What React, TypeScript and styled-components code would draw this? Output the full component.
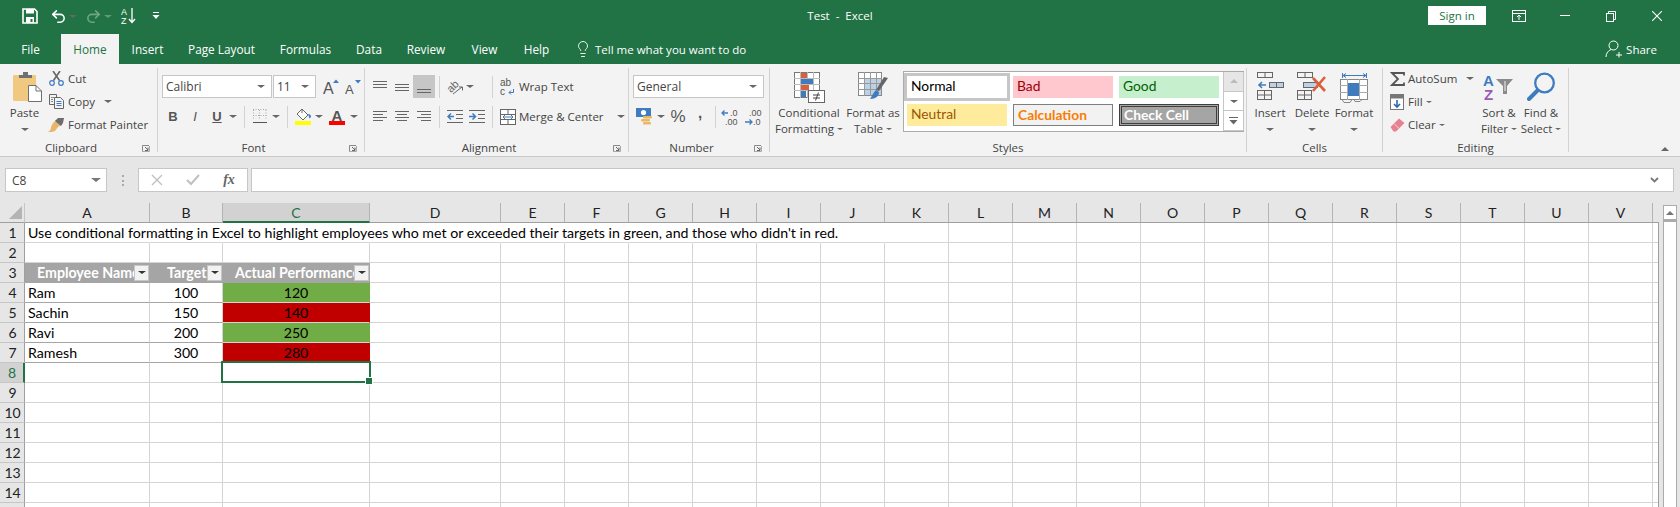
import React from "react";
import styled, { createGlobalStyle } from "styled-components";
import { Lightbulb, Redo2, Undo2 } from "lucide-react";

const GREEN = "#217346";
const UI_FONT = `"Open Sans", "Noto Sans", sans-serif`;
const SHEET_FONT = `Lato, "Liberation Sans", sans-serif`;

const GlobalStyle = createGlobalStyle`
  html, body { margin: 0; padding: 0; background: #fff; overflow: hidden; }
  * { box-sizing: border-box; }
`;

const Page = styled.div`
  width: 1680px;
  height: 507px;
  overflow: hidden;
  font-family: ${UI_FONT};
  font-size: 11.5px;
  color: #444;
`;

/* title bar */
const TitleBar = styled.div`
  height: 34px;
  background: ${GREEN};
  color: #fff;
  display: grid;
  grid-template-columns: 1fr auto 1fr;
  align-items: start;
`;
const QuickAccess = styled.div`
  display: flex;
  align-items: center;
  height: 32px;
  padding-left: 20px;
`;
const Btn = styled.div<{ $w: number; $l?: number }>`
  width: ${(p) => p.$w}px;
  margin-left: ${(p) => p.$l ?? 0}px;
  flex: none;
  height: 100%;
  display: flex;
  align-items: center;
  justify-content: center;
`;
const DocTitle = styled.div`
  font-size: 11.5px;
  line-height: 32px;
  color: #fff;
  white-space: pre;
`;
const WindowArea = styled.div`
  display: flex;
  justify-content: flex-end;
  height: 32px;
`;
const SignIn = styled.div`
  width: 58px;
  height: 19px;
  margin: 6px 10px 0 0;
  background: #fff;
  color: ${GREEN};
  font-size: 11.5px;
  line-height: 19px;
  text-align: center;
`;
const WinBtn = styled.div`
  width: 46px;
  display: flex;
  align-items: center;
  justify-content: center;
`;

/* tabs */
const TabRow = styled.div`
  height: 30px;
  background: ${GREEN};
  display: flex;
  align-items: stretch;
  color: #fff;
`;
const Tab = styled.div<{ $w: number; $active?: boolean }>`
  width: ${(p) => p.$w}px;
  text-align: center;
  font-size: 11.8px;
  line-height: 30px;
  background: ${(p) => (p.$active ? "#f3f3f3" : "transparent")};
  color: ${(p) => (p.$active ? GREEN : "#fff")};
`;
const TellMe = styled.div`
  display: flex;
  align-items: center;
  gap: 3px;
  margin-left: 12px;
  font-size: 11.5px;
`;
const Share = styled.div`
  margin-left: auto;
  padding-right: 23px;
  display: flex;
  align-items: center;
  gap: 2px;
  font-size: 11.5px;
`;

/* ribbon */
const Ribbon = styled.div`
  height: 93px;
  background: #f3f3f3;
  border-bottom: 1px solid #c9c9c9;
  padding-top: 4px;
  display: flex;
  align-items: flex-start;
  position: relative;
`;
const Group = styled.div<{ $w: number }>`
  width: ${(p) => p.$w}px;
  height: 84px;
  flex: none;
  border-right: 1px solid #d2d2d2;
  display: flex;
  flex-direction: column;
`;
const GroupBody = styled.div<{ $pad?: number }>`
  height: 72px;
  flex: none;
  padding-left: ${(p) => p.$pad ?? 0}px;
  display: flex;
  align-items: flex-start;
`;
const GroupFoot = styled.div`
  height: 16px;
  flex: none;
  display: flex;
  align-items: center;
`;
const GroupLabel = styled.div`
  flex: 1;
  text-align: center;
  font-size: 11.5px;
  line-height: 16px;
  color: #444;
`;
const Launcher = styled.div`
  width: 15px;
  display: flex;
  align-items: center;
`;
const Collapse = styled.div`
  position: absolute;
  right: 8px;
  bottom: 5px;
  width: 14px;
  display: flex;
  justify-content: center;
`;
const Caret = styled.span<{ $c?: string; $s?: number }>`
  display: inline-block;
  flex: none;
  width: 0;
  height: 0;
  border-left: ${(p) => p.$s ?? 4}px solid transparent;
  border-right: ${(p) => p.$s ?? 4}px solid transparent;
  border-top: ${(p) => (p.$s ?? 4) - 1}px solid ${(p) => p.$c ?? "#666"};
`;
const ThreeRows = styled.div<{ $w?: number; $l?: number }>`
  width: ${(p) => (p.$w ? `${p.$w}px` : "auto")};
  margin: -1px 0 0 ${(p) => p.$l ?? 0}px;
  flex: none;
  display: flex;
  flex-direction: column;
`;
const SmallRow = styled.div`
  height: 23px;
  display: flex;
  align-items: center;
  white-space: nowrap;
`;
const IconBox = styled.div<{ $w?: number }>`
  width: ${(p) => p.$w ?? 16}px;
  flex: none;
  margin-right: 3px;
  display: flex;
  justify-content: center;
`;
const TwoRows = styled.div`
  padding-top: 7px;
  display: flex;
  flex-direction: column;
  gap: 7px;
`;
const ToolRow = styled.div`
  height: 23px;
  display: flex;
  align-items: center;
  white-space: nowrap;
`;
const Sep = styled.div<{ $l: number; $r: number }>`
  width: 1px;
  height: 22px;
  flex: none;
  margin: 0 ${(p) => p.$r}px 0 ${(p) => p.$l}px;
  background: #d2d2d2;
`;
const Combo = styled.div<{ $w: number; $l?: number }>`
  width: ${(p) => p.$w}px;
  margin-left: ${(p) => p.$l ?? 0}px;
  height: 23px;
  flex: none;
  background: #fff;
  border: 1px solid #c6c6c6;
  display: flex;
  align-items: center;
  justify-content: space-between;
  padding: 0 6px 0 3px;
  font-size: 12px;
`;
const HighlightBtn = styled(Btn)`
  background: #c6c6c6;
  height: 23px;
`;
const LargeBtn = styled.div<{ $w: number }>`
  width: ${(p) => p.$w}px;
  flex: none;
  display: flex;
  flex-direction: column;
  align-items: center;
`;
const LargeIcon = styled.div<{ $l?: number }>`
  height: 37px;
  padding-top: 4px;
  margin-left: ${(p) => p.$l ?? 0}px;
`;
const LargeLine = styled.div`
  height: 16px;
  line-height: 16px;
  display: flex;
  align-items: center;
  gap: 3px;
  white-space: nowrap;
`;
const Glyph = styled.span<{ $weight?: number; $italic?: boolean; $under?: boolean; $size?: number; $lift?: number }>`
  font-family: "Liberation Sans", sans-serif;
  font-size: ${(p) => p.$size ?? 13}px;
  font-weight: ${(p) => p.$weight ?? 400};
  font-style: ${(p) => (p.$italic ? "italic" : "normal")};
  text-decoration: ${(p) => (p.$under ? "underline" : "none")};
  padding-bottom: ${(p) => p.$lift ?? 0}px;
  color: #555;
`;

/* cell styles gallery */
const Gallery = styled.div`
  width: 341px;
  height: 61px;
  margin: 3px 0 0 1px;
  flex: none;
  display: flex;
  border: 1px solid #ababab;
  border-right: none;
  background: #fff;
`;
const GalleryGrid = styled.div`
  width: 319px;
  padding: 4px 0 0 3px;
  display: grid;
  grid-template-columns: repeat(3, 100px);
  grid-template-rows: repeat(2, 22px);
  gap: 6px;
`;
const STYLE_VARIANTS: Record<string, string> = {
  normal: "background:#fff;color:#000;box-shadow:0 0 0 3px #c6c6c6;",
  bad: "background:#ffc7ce;color:#9c0006;",
  good: "background:#c6efce;color:#006100;",
  neutral: "background:#ffeb9c;color:#9c5700;",
  calc: "background:#f2f2f2;color:#fa7d00;font-weight:700;border:1px solid #7f7f7f;",
  check: "background:#a5a5a5;color:#fff;font-weight:700;border:1px solid #3f3f3f;outline:1px solid #3f3f3f;outline-offset:-3px;",
};
const StyleCell = styled.div<{ $v: string }>`
  font-family: ${SHEET_FONT};
  font-size: 13.8px;
  line-height: 19px;
  padding-left: 4px;
  ${(p) => STYLE_VARIANTS[p.$v]}
`;
const GalleryScroll = styled.div`
  width: 21px;
  display: flex;
  flex-direction: column;
  border-right: 1px solid #c6c6c6;
`;
const ScrollBtn = styled.div<{ $off?: boolean }>`
  height: 20px;
  border-left: 1px solid #c6c6c6;
  border-bottom: 1px solid #c6c6c6;
  background: ${(p) => (p.$off ? "#e6e6e6" : "#fff")};
  display: flex;
  align-items: center;
  justify-content: center;
`;
const UpTri = styled.span<{ $c?: string }>`
  width: 0;
  height: 0;
  border-left: 4px solid transparent;
  border-right: 4px solid transparent;
  border-bottom: 4px solid ${(p) => p.$c ?? "#bbb"};
`;

/* formula bar */
const FormulaRow = styled.div`
  height: 46px;
  background: #e6e6e6;
  padding: 11px 6px 0 5px;
  display: flex;
  align-items: flex-start;
`;
const BarBox = styled.div<{ $w?: number; $l?: number }>`
  ${(p) => (p.$w ? `width:${p.$w}px;flex:none;` : "flex:1;")}
  margin-left: ${(p) => p.$l ?? 0}px;
  height: 24px;
  background: #fff;
  border: 1px solid #c6c6c6;
  display: flex;
  align-items: center;
`;
const NameText = styled.span`
  flex: 1;
  padding-left: 6px;
  font-size: 12px;
  color: #444;
`;
const Dots = styled.div`
  width: 2px;
  height: 11px;
  margin: 7px 0 0 15px;
  flex: none;
  background: repeating-linear-gradient(#aaa 0 2px, transparent 2px 4.5px);
`;
const FxGlyph = styled.span`
  font-family: "Liberation Serif", serif;
  font-style: italic;
  font-weight: 700;
  font-size: 14px;
  color: #666;
`;

/* sheet */
const SheetArea = styled.div`
  display: flex;
  background: #e6e6e6;
  height: 304px;
`;
const Grid = styled.div`
  width: 1659px;
  flex: none;
  display: flex;
  flex-direction: column;
`;
const HeaderRow = styled.div`
  display: flex;
  height: 20px;
  flex: none;
`;
const Corner = styled.div`
  width: 25px;
  flex: none;
  border-right: 1px solid #c6c6c6;
  border-bottom: 1px solid #9f9f9f;
  display: flex;
  align-items: flex-end;
  justify-content: flex-end;
  padding: 0 2px 3px 0;
`;
const ColHead = styled.div<{ $w: number; $sel?: boolean; $plain?: boolean }>`
  width: ${(p) => p.$w}px;
  flex: none;
  text-align: center;
  font-family: ${SHEET_FONT};
  font-size: 14px;
  line-height: 19px;
  color: ${(p) => (p.$sel ? GREEN : "#222")};
  background: ${(p) => (p.$sel ? "#d2d2d2" : "#e6e6e6")};
  border-right: ${(p) => (p.$plain ? "none" : "1px solid #b4b4b4")};
  border-bottom: ${(p) => (p.$sel ? `2px solid ${GREEN}` : "1px solid #9f9f9f")};
`;
const GridBody = styled.div`
  flex: 1;
  background: #fff;
  border-right: 1px solid #9f9f9f;
  overflow: hidden;
`;
const SheetRow = styled.div`
  display: flex;
  height: 20px;
`;
const RowHead = styled.div<{ $sel?: boolean }>`
  width: 25px;
  flex: none;
  text-align: center;
  font-family: ${SHEET_FONT};
  font-size: 14px;
  line-height: 20px;
  padding-left: 1px;
  color: ${(p) => (p.$sel ? GREEN : "#222")};
  background: ${(p) => (p.$sel ? "#d2d2d2" : "#e6e6e6")};
  border-bottom: 1px solid #c6c6c6;
  border-right: ${(p) => (p.$sel ? `2px solid ${GREEN}` : "1px solid #9f9f9f")};
`;
const Cell = styled.div<{
  $w: number;
  $fill?: string;
  $center?: boolean;
  $noRight?: boolean;
  $tableLine?: boolean;
  $selected?: boolean;
}>`
  width: ${(p) => p.$w}px;
  flex: none;
  position: relative;
  white-space: nowrap;
  font-family: ${SHEET_FONT};
  font-size: 14.2px;
  line-height: 20px;
  color: #000;
  padding: 0 3px;
  text-align: ${(p) => (p.$center ? "center" : "left")};
  background: ${(p) => p.$fill ?? "transparent"};
  border-bottom: 1px solid ${(p) => (p.$tableLine ? "#a5a5a5" : "#d4d4d4")};
  border-right: 1px solid ${(p) => (p.$noRight ? "transparent" : p.$fill ?? "#d4d4d4")};
  ${(p) =>
    p.$selected &&
    `&::after {
      content: "";
      position: absolute;
      top: -2px; left: -2px; right: -2px; bottom: -1px;
      border: 2px solid ${GREEN};
    }
    &::before {
      content: "";
      position: absolute;
      z-index: 1;
      right: -4px; bottom: -3px;
      width: 6px; height: 6px;
      background: ${GREEN};
      border: 1px solid #fff;
    }`}
`;
const TableHead = styled.div<{ $w: number }>`
  width: ${(p) => p.$w}px;
  flex: none;
  display: flex;
  align-items: center;
  background: #a5a5a5;
  border-bottom: 1px solid #a5a5a5;
`;
const TableHeadText = styled.div<{ $pad: number }>`
  flex: 1;
  min-width: 0;
  overflow: hidden;
  white-space: nowrap;
  padding-left: ${(p) => p.$pad}px;
  font-family: ${SHEET_FONT};
  font-weight: 700;
  font-size: 14.2px;
  line-height: 20px;
  color: #fff;
`;
const FilterBtn = styled.div`
  width: 15px;
  height: 16px;
  margin-right: 1px;
  flex: none;
  background: #f2f2f2;
  border: 1px solid #c6c6c6;
  display: flex;
  align-items: center;
  justify-content: center;
`;
const VScroll = styled.div`
  flex: 1;
  padding: 2px 0 0 4px;
`;
const VScrollBtn = styled.div`
  width: 14px;
  height: 15px;
  background: #fff;
  border: 1px solid #ababab;
  display: flex;
  align-items: center;
  justify-content: center;
`;
const VScrollTrack = styled.div`
  width: 14px;
  height: 300px;
  background: #fff;
  border: 1px solid #ababab;
  border-top-width: 2px;
`;

/* icons */
const Svg = ({ w, h, children }: { w: number; h: number; children: React.ReactNode }) => (
  <svg width={w} height={h} viewBox={`0 0 ${w} ${h}`} style={{ display: "block" }} fill="none">
    {children}
  </svg>
);
const Lines = ({ w = 14, h = 14, rows, c = "#666" }: { w?: number; h?: number; rows: number[][]; c?: string }) => (
  <Svg w={w} h={h}>
    {rows.map(([a, b, y], i) => (
      <line key={i} x1={a} x2={b} y1={y + 0.5} y2={y + 0.5} stroke={c} />
    ))}
  </Svg>
);
const TXT = { fontFamily: "Liberation Sans, sans-serif" };

const SaveIcon = () => (
  <Svg w={16} h={16}>
    <path d="M1 1h11.5L15 3.5V15H1z" stroke="#fff" strokeWidth="1.6" />
    <rect x="4" y="1" width="8" height="4.5" fill="#fff" />
    <rect x="4" y="9" width="8" height="6" fill="#fff" />
    <rect x="8.5" y="11" width="2" height="3" fill={GREEN} />
  </Svg>
);
const SortIcon = () => (
  <Svg w={16} h={20}>
    <text x="0" y="9" fontSize="9" fill="#fff" style={TXT}>A</text>
    <text x="0" y="18" fontSize="9" fill="#fff" style={TXT}>Z</text>
    <path d="M11 2v14M8 13l3 3.500 3-3.500" stroke="#fff" strokeWidth="1.300" />
  </Svg>
);
const CustomizeIcon = () => (
  <Svg w={8} h={8}>
    <rect x="1" y="0" width="6" height="1" fill="#fff" />
    <path d="M0.5 3h7L4 7z" fill="#fff" />
  </Svg>
);
const RibbonDisplayIcon = () => (
  <Svg w={14} h={12}>
    <rect x="0.5" y="0.5" width="13" height="11" stroke="#fff" />
    <path d="M0 3.5h14M7 10V5M5 7l2-2 2 2" stroke="#fff" />
  </Svg>
);
const MinIcon = () => (
  <Svg w={10} h={2}>
    <rect width="10" height="1" fill="#fff" />
  </Svg>
);
const RestoreIcon = () => (
  <Svg w={10} h={11}>
    <rect x="0.5" y="2.5" width="7" height="8" stroke="#fff" />
    <path d="M2.5 2.5v-2h7v8h-2" stroke="#fff" />
  </Svg>
);
const CloseIcon = () => (
  <Svg w={10} h={10}>
    <path d="M0 0l10 10M10 0L0 10" stroke="#fff" strokeWidth="1.1" />
  </Svg>
);
const ShareIcon = () => (
  <Svg w={19} h={18}>
    <circle cx="8.5" cy="5.5" r="4.5" stroke="#fff" />
    <path d="M1 17c0-4 2.500-6.500 5-7.500M14 12v5.500M11 15h6" stroke="#fff" />
  </Svg>
);
const PasteIcon = () => (
  <Svg w={29} h={30}>
    <rect x="0" y="3" width="23" height="26" rx="1" fill="#f0c87f" />
    <path d="M6 5V3h4V0h5v3h4v3H6z" fill="#707070" />
    <path d="M15.500 13.500H23l5.500 5.500v10.500h-13z" fill="#fff" stroke="#707070" />
    <path d="M23 13.500V19h5.500" stroke="#707070" />
  </Svg>
);
const CutIcon = () => (
  <Svg w={15} h={15}>
    <path d="M4.500 9.500L11 0M10.500 9.500L4 0" stroke="#666" strokeWidth="1.6" />
    <circle cx="3" cy="12" r="2.300" stroke="#3f7cbf" strokeWidth="1.200" />
    <circle cx="12" cy="12" r="2.300" stroke="#3f7cbf" strokeWidth="1.200" />
  </Svg>
);
const CopyIcon = () => (
  <Svg w={16} h={15}>
    <path d="M5.500 10.500h-5v-10h7l0 3" stroke="#666" />
    <path d="M5.500 3.500h6l3 3v8h-9z" fill="#f3f3f3" stroke="#666" />
    <path d="M7.500 7.500h5M7.500 9.500h5M7.500 11.500h5" stroke="#3f7cbf" />
    <path d="M2 3.500h3M2 5.500h2M2 7.500h2" stroke="#888" />
  </Svg>
);
const PainterIcon = () => (
  <Svg w={17} h={15}>
    <path d="M8 3l5 5-3 2-3 4c-2 1-5 1-7 1 2-1 3-3 3-5l2-4z" fill="#e8b56d" />
    <path d="M7 4l3-3 6 0-1 5-2 3z" fill="#6d6d6d" />
  </Svg>
);
const ACaret = ({ size, up }: { size: number; up: boolean }) => (
  <Svg w={18} h={20}>
    <text x="0" y="17" fontSize={size} fill="#555" style={TXT}>A</text>
    <path d={up ? "M10 6l3-3.500 3 3.500z" : "M10 3h6l-3 3.500z"} fill="#3f7cbf" />
  </Svg>
);
const BordersIcon = () => (
  <Svg w={14} h={15}>
    <path d="M0.500 1v10M6.500 1v10M13 1v10M0 0.500h14M0 6.500h14" stroke="#aaa" strokeDasharray="1 1.500" />
    <rect x="0" y="13" width="14" height="1" fill="#555" />
  </Svg>
);
const FillIcon = () => (
  <Svg w={17} h={17}>
    <path d="M7 1l6 6-5 5-6-6z" fill="#fff" stroke="#666" />
    <path d="M7 1v4" stroke="#666" />
    <path d="M13 6c2 0 3 1 3 3l-1.500 1.500z" fill="#3f7cbf" />
    <rect x="0" y="13" width="16" height="4" fill="#ffff00" />
  </Svg>
);
const ColorAIcon = () => (
  <Svg w={17} h={18}>
    <text x="2.500" y="13" fontSize="15" fontWeight="700" fill="#555" style={TXT}>A</text>
    <rect x="0" y="13" width="16" height="4" fill="#ff0000" />
  </Svg>
);
const OrientIcon = () => (
  <Svg w={20} h={20}>
    <text x="2" y="13" fontSize="11" fill="#666" transform="rotate(-45 8 10)" style={TXT}>ab</text>
    <path d="M8 17l9-7M14 10h3.500v3.500" stroke="#666" />
  </Svg>
);
const IndentIcon = ({ out }: { out?: boolean }) => (
  <Svg w={16} h={14}>
    {[0, 4, 8, 12].map((y) => (
      <line key={y} x1={y === 0 || y === 12 ? 0 : 9} x2="16" y1={y + 0.5} y2={y + 0.5} stroke="#666" />
    ))}
    <path d={out ? "M7 6.500H1M4 3.500l-3 3 3 3" : "M0 6.500h6M3.500 3.500l3 3-3 3"} stroke="#3f7cbf" strokeWidth="1.500" />
  </Svg>
);
const WrapIcon = () => (
  <Svg w={16} h={21}>
    <text x="0" y="10" fontSize="10" fill="#555" style={TXT}>ab</text>
    <text x="0" y="19" fontSize="10" fill="#555" style={TXT}>c</text>
    <path d="M13.500 13v3.500H9M11 14.500l-2 2 2 2" stroke="#3f7cbf" />
  </Svg>
);
const MergeIcon = () => (
  <Svg w={16} h={16}>
    <rect x="0.500" y="0.500" width="15" height="15" stroke="#666" fill="#fff" />
    <path d="M0 5.500h16M0 10.500h16M8 0v5M8 11v5" stroke="#666" />
    <path d="M3 8h10M5 6l-2 2 2 2M11 6l2 2-2 2" stroke="#3f7cbf" />
  </Svg>
);
const CurrencyIcon = () => (
  <Svg w={17} h={17}>
    <rect x="0" y="0" width="15" height="9" fill="#3f7cbf" />
    <circle cx="7.500" cy="4.500" r="2.600" fill="#fff" />
    <rect x="7" y="8" width="9" height="2.500" rx="1" fill="#e9b864" />
    <rect x="5" y="11" width="9" height="2.500" rx="1" fill="#e9b864" />
    <rect x="7" y="14" width="8" height="2.500" rx="1" fill="#e9b864" />
  </Svg>
);
const DecimalIcon = ({ more }: { more?: boolean }) => (
  <Svg w={18} h={22}>
    <text x={more ? 9 : 5} y="10" fontSize="9" fill="#555" style={TXT}>{more ? ".0" : ".00"}</text>
    <text x={more ? 4 : 9} y="19" fontSize="9" fill="#555" style={TXT}>{more ? ".00" : ".0"}</text>
    <path d={more ? "M7 7H1M3.500 4.500L1 7l2.500 2.500" : "M1 16h7M5.500 13.500L8 16l-2.500 2.500"} stroke="#3f7cbf" strokeWidth="1.300" />
  </Svg>
);
const CondIcon = () => (
  <Svg w={31} h={32}>
    <rect x="0.500" y="0.500" width="25" height="25" fill="#fff" stroke="#777" />
    <path d="M6.500 0v26M13.500 0v26M19.500 0v26M0 6.500h26M0 12.500h26M0 18.500h26" stroke="#bbb" />
    <rect x="7" y="1" width="6" height="5" fill="#d9603b" />
    <rect x="7" y="7" width="12" height="5" fill="#3f7cbf" />
    <rect x="7" y="13" width="8" height="5" fill="#d9603b" />
    <rect x="7" y="19" width="5" height="6" fill="#3f7cbf" />
    <rect x="14.500" y="18.500" width="16" height="12" fill="#fff" stroke="#666" />
    <path d="M19 23h7M19 26h7M24.500 20.500l-3 8" stroke="#444" />
  </Svg>
);
const TableIcon = () => (
  <Svg w={31} h={30}>
    <rect x="0.500" y="0.500" width="23" height="23" fill="#fff" stroke="#888" />
    <rect x="7" y="6" width="16" height="17" fill="#bcd0e6" />
    <path d="M6.500 0v24M12.500 0v24M18.500 0v24M0 6.500h24M0 11.500h24M0 17.500h24" stroke="#999" />
    <path d="M30 6l-9 13-3-1 8-13z" fill="#666" />
    <path d="M18 18l3 2c0 4-3 7-9 7 2-3 3-6 6-9z" fill="#3f7cbf" />
  </Svg>
);
const MiniGrid = ({ x, y, w, h, c = "#666" }: { x: number; y: number; w: number; h: number; c?: string }) => (
  <g stroke={c}>
    <rect x={x + 0.5} y={y + 0.5} width={w} height={h} />
    <path d={`M${x + w / 2 + 0.5} ${y}v${h + 1}`} />
  </g>
);
const InsertIcon = () => (
  <Svg w={27} h={28}>
    <MiniGrid x={0} y={0} w={15} h={5} />
    <rect x="12.500" y="10.500" width="14" height="5" fill="#bcd0e6" stroke="#666" />
    <path d="M19.500 10v6" stroke="#666" />
    <path d="M9 13H2M5 10l-3 3 3 3" stroke="#3f7cbf" strokeWidth="1.600" />
    <rect x="0.500" y="18.500" width="14" height="9" stroke="#666" />
    <path d="M0 23h15M7.500 18v10" stroke="#666" />
  </Svg>
);
const DeleteIcon = () => (
  <Svg w={30} h={28}>
    <MiniGrid x={0} y={0} w={15} h={5} />
    <rect x="6.500" y="10.500" width="14" height="5" fill="#bcd0e6" stroke="#666" />
    <rect x="0.500" y="18.500" width="14" height="9" stroke="#666" />
    <path d="M0 23h15M7.500 18v10" stroke="#666" />
    <path d="M16 6l12 13M28 5L16 19" stroke="#d9603b" strokeWidth="2.600" />
  </Svg>
);
const FormatIcon = () => (
  <Svg w={29} h={32}>
    <path d="M2.500 1v5M26.500 1v5M3 3.500h23M6 1.500l-3 2 3 2M23 1.500l3 2-3 2" stroke="#3f7cbf" />
    <rect x="0.500" y="7.500" width="27" height="20" fill="#fff" stroke="#888" />
    <path d="M7.500 7v21M19.500 7v21M0 13.500h28M0 20.500h28" stroke="#aaa" />
    <rect x="8" y="11" width="11" height="13" fill="#3f7cbf" />
    <path d="M2 27.500l2 3h6l2-3M14 27.500l1 2h5l2-2" stroke="#888" />
  </Svg>
);
const SigmaIcon = () => (
  <Svg w={15} h={14}>
    <path d="M14 3.500V1H2l6 6-6 6h12v-2.500" stroke="#555" strokeWidth="1.800" />
  </Svg>
);
const FillDownIcon = () => (
  <Svg w={14} h={16}>
    <rect x="0.500" y="0.500" width="13" height="15" fill="#fff" stroke="#777" />
    <rect x="1" y="1" width="12" height="3.500" fill="#777" />
    <path d="M7 6v7M4 10l3 3 3-3" stroke="#2b6cb0" strokeWidth="1.600" />
  </Svg>
);
const EraserIcon = () => (
  <Svg w={15} h={14}>
    <path d="M0.500 9L9 0.500 14.500 5 6 13.500H3.500z" fill="#e8808f" />
    <path d="M4 5.500l5 5" stroke="#f6d5da" />
  </Svg>
);
const SortFilterIcon = () => (
  <Svg w={32} h={31}>
    <text x="0" y="14" fontSize="15" fontWeight="700" fill="#3f7cbf" style={TXT}>A</text>
    <text x="1" y="28" fontSize="15" fontWeight="700" fill="#9b59b6" style={TXT}>Z</text>
    <path d="M13 7h17l-6 7v8h-4v-8z" fill="#8a8a8a" />
    <path d="M22 9v10" stroke="#f3f3f3" />
  </Svg>
);
const FindIcon = () => (
  <Svg w={29} h={29}>
    <circle cx="17.500" cy="11" r="9.300" stroke="#3f7cbf" strokeWidth="2.300" />
    <path d="M10.500 18.500L2 27" stroke="#3f7cbf" strokeWidth="4" strokeLinecap="round" />
  </Svg>
);
const LauncherIcon = () => (
  <Svg w={8} h={7}>
    <path d="M0.500 6V0.500H7" stroke="#888" />
    <path d="M3 2l3 3M6 2.500V5.500H3" stroke="#666" />
    <path d="M0 6.500h7.500V1" stroke="#aaa" />
  </Svg>
);
const CornerTri = () => (
  <Svg w={13} h={13}>
    <path d="M13 0v13H0z" fill="#b4b4b4" />
  </Svg>
);
const ChevronDown = () => (
  <Svg w={9} h={6}>
    <path d="M1 1l3.500 3.500L8 1" stroke="#777" strokeWidth="1.800" />
  </Svg>
);
const CrossIcon = () => (
  <Svg w={12} h={12}>
    <path d="M1 1l10 10M11 1L1 11" stroke="#c0c0c0" strokeWidth="1.400" />
  </Svg>
);
const CheckIcon = () => (
  <Svg w={14} h={12}>
    <path d="M1 6l4 4 8-9" stroke="#c0c0c0" strokeWidth="2" />
  </Svg>
);
const MoreIcon = () => (
  <Svg w={9} h={8}>
    <rect x="0" y="0" width="9" height="1" fill="#666" />
    <path d="M0.500 3h8L4.500 7.500z" fill="#666" />
  </Svg>
);

/* data */
const TABS: [string, number][] = [
  ["File", 61], ["Home", 58], ["Insert", 57], ["Page Layout", 91], ["Formulas", 77],
  ["Data", 50], ["Review", 64], ["View", 53], ["Help", 51],
];
const COLS: [string, number][] = [
  ["A", 125], ["B", 73], ["C", 147], ["D", 131],
  ...("EFGHIJKLMNOPQRSTUV".split("").map((c) => [c, 64]) as [string, number][]),
  ["", 6],
];
const TABLE = [
  ["Ram", "100", "120", "#70ad47"],
  ["Sachin", "150", "140", "#c00000"],
  ["Ravi", "200", "250", "#70ad47"],
  ["Ramesh", "300", "280", "#c00000"],
];
const ROW_ONE_TEXT =
  "Use conditional formatting in Excel to highlight employees who met or exceeded their targets in green, and those who didn't in red.";

const otherCols = (from: number, n: number) =>
  COLS.slice(from).map(([c, w], i) => <Cell key={c || "end"} $w={w} $noRight={i + from >= COLS.length - 1 || i + from < n} />);

const CaretBtn = ({ w = 10, l }: { w?: number; l?: number }) => (
  <Btn $w={w} $l={l}>
    <Caret $s={4} />
  </Btn>
);

const LEFT_LINES = [[0, 14, 1], [0, 10, 4], [0, 14, 7], [0, 10, 10]];
const CENTER_LINES = [[0, 14, 1], [2, 12, 4], [0, 14, 7], [2, 12, 10]];
const RIGHT_LINES = [[0, 14, 1], [4, 14, 4], [0, 14, 7], [4, 14, 10]];

function SheetRows() {
  const rows = [];
  rows.push(
    <SheetRow key={1}>
      <RowHead>1</RowHead>
      <Cell $w={125} $noRight>{ROW_ONE_TEXT}</Cell>
      {otherCols(1, 10)}
    </SheetRow>
  );
  rows.push(
    <SheetRow key={2}>
      <RowHead>2</RowHead>
      {otherCols(0, 0)}
    </SheetRow>
  );
  rows.push(
    <SheetRow key={3}>
      <RowHead>3</RowHead>
      <TableHead $w={125}><TableHeadText $pad={12}>Employee Name</TableHeadText><FilterBtn><Caret $c="#333" /></FilterBtn></TableHead>
      <TableHead $w={73}><TableHeadText $pad={17}>Target</TableHeadText><FilterBtn><Caret $c="#333" /></FilterBtn></TableHead>
      <TableHead $w={147}><TableHeadText $pad={12}>Actual Performance</TableHeadText><FilterBtn><Caret $c="#333" /></FilterBtn></TableHead>
      {otherCols(3, 0)}
    </SheetRow>
  );
  TABLE.forEach(([name, target, actual, fill], i) => {
    rows.push(
      <SheetRow key={4 + i}>
        <RowHead>{4 + i}</RowHead>
        <Cell $w={125} $tableLine>{name}</Cell>
        <Cell $w={73} $center $tableLine>{target}</Cell>
        <Cell $w={147} $center $fill={fill}>{actual}</Cell>
        {otherCols(3, 0)}
      </SheetRow>
    );
  });
  rows.push(
    <SheetRow key={8}>
      <RowHead $sel>8</RowHead>
      <Cell $w={125} />
      <Cell $w={73} />
      <Cell $w={147} $selected />
      {otherCols(3, 0)}
    </SheetRow>
  );
  for (let n = 9; n <= 15; n++) {
    rows.push(
      <SheetRow key={n}>
        {/* row 15 only peeks in at the window's bottom edge, its number stays out of view */}
        <RowHead>{n < 15 ? n : ""}</RowHead>
        {otherCols(0, 0)}
      </SheetRow>
    );
  }
  return <>{rows}</>;
}

export default function App() {
  return (
    <Page>
      <GlobalStyle />
      <TitleBar>
        <QuickAccess>
          <Btn $w={20}><SaveIcon /></Btn>
          <Btn $w={20} $l={8}><Undo2 size={17} color="#fff" strokeWidth={2.2} /></Btn>
          <CaretBtn />
          <Btn $w={20} $l={5}><Redo2 size={17} color="#ffffff" opacity={0.35} strokeWidth={2.2} /></Btn>
          <Btn $w={10}><Caret $c="#5d9a7c" /></Btn>
          <Btn $w={20} $l={6}><SortIcon /></Btn>
          <Btn $w={10} $l={12}><CustomizeIcon /></Btn>
        </QuickAccess>
        <DocTitle>{"Test  -  Excel"}</DocTitle>
        <WindowArea>
          <SignIn>Sign in</SignIn>
          <WinBtn><RibbonDisplayIcon /></WinBtn>
          <WinBtn><MinIcon /></WinBtn>
          <WinBtn><RestoreIcon /></WinBtn>
          <WinBtn><CloseIcon /></WinBtn>
        </WindowArea>
      </TitleBar>
      <TabRow>
        {TABS.map(([t, w]) => (
          <Tab key={t} $w={w} $active={t === "Home"}>{t}</Tab>
        ))}
        <TellMe>
          <Lightbulb size={18} color="#fff" strokeWidth={1.2} />
          Tell me what you want to do
        </TellMe>
        <Share>
          <ShareIcon />
          Share
        </Share>
      </TabRow>

      <Ribbon>
        <Group $w={158}>
          <GroupBody $pad={8}>
            <LargeBtn $w={33}>
              <LargeIcon $l={5}><PasteIcon /></LargeIcon>
              <LargeLine>Paste</LargeLine>
              <LargeLine><Caret /></LargeLine>
            </LargeBtn>
            <ThreeRows $l={7}>
              <SmallRow><IconBox $w={17}><CutIcon /></IconBox>Cut</SmallRow>
              <SmallRow><IconBox $w={17}><CopyIcon /></IconBox>Copy<Btn $w={12} $l={7}><Caret /></Btn></SmallRow>
              <SmallRow><IconBox $w={17}><PainterIcon /></IconBox>Format Painter</SmallRow>
            </ThreeRows>
          </GroupBody>
          <GroupFoot><GroupLabel>Clipboard</GroupLabel><Launcher><LauncherIcon /></Launcher></GroupFoot>
        </Group>

        <Group $w={207}>
          <GroupBody $pad={4}>
            <TwoRows>
              <ToolRow>
                <Combo $w={110}>Calibri<Caret /></Combo>
                <Combo $w={43} $l={1}>11<Caret /></Combo>
                <Btn $w={22} $l={5}><ACaret size={16} up /></Btn>
                <Btn $w={22}><ACaret size={13} up={false} /></Btn>
              </ToolRow>
              <ToolRow>
                <Btn $w={22}><Glyph $weight={700}>B</Glyph></Btn>
                <Btn $w={22}><Glyph $italic>I</Glyph></Btn>
                <Btn $w={22}><Glyph $under $weight={700}>U</Glyph></Btn>
                <CaretBtn />
                <Sep $l={6} $r={5} />
                <Btn $w={20}><BordersIcon /></Btn>
                <CaretBtn w={12} />
                <Sep $l={5} $r={5} />
                <Btn $w={20}><FillIcon /></Btn>
                <CaretBtn w={12} />
                <Btn $w={24}><ColorAIcon /></Btn>
                <CaretBtn />
              </ToolRow>
            </TwoRows>
          </GroupBody>
          <GroupFoot><GroupLabel>Font</GroupLabel><Launcher><LauncherIcon /></Launcher></GroupFoot>
        </Group>

        <Group $w={264}>
          <GroupBody $pad={4}>
            <TwoRows>
              <ToolRow>
                <Btn $w={22}><Lines rows={[[0, 14, 1], [0, 14, 4], [0, 14, 7]]} /></Btn>
                <Btn $w={22}><Lines rows={[[0, 14, 4], [0, 14, 7], [0, 14, 10]]} /></Btn>
                <HighlightBtn $w={22}><Lines rows={[[0, 14, 9], [0, 14, 12]]} /></HighlightBtn>
                <Sep $l={4} $r={4} />
                <Btn $w={22}><OrientIcon /></Btn>
                <CaretBtn w={8} />
                <Sep $l={18} $r={7} />
                <IconBox><WrapIcon /></IconBox>
                Wrap Text
              </ToolRow>
              <ToolRow>
                <Btn $w={22}><Lines rows={LEFT_LINES} /></Btn>
                <Btn $w={22}><Lines rows={CENTER_LINES} /></Btn>
                <Btn $w={22}><Lines rows={RIGHT_LINES} /></Btn>
                <Sep $l={4} $r={4} />
                <Btn $w={22}><IndentIcon out /></Btn>
                <Btn $w={22}><IndentIcon /></Btn>
                <Sep $l={4} $r={7} />
                <IconBox><MergeIcon /></IconBox>
                Merge &amp; Center
                <Btn $w={12} $l={11}><Caret /></Btn>
              </ToolRow>
            </TwoRows>
          </GroupBody>
          <GroupFoot><GroupLabel>Alignment</GroupLabel><Launcher><LauncherIcon /></Launcher></GroupFoot>
        </Group>

        <Group $w={141}>
          <GroupBody $pad={4}>
            <TwoRows>
              <ToolRow>
                <Combo $w={131}>General<Caret /></Combo>
              </ToolRow>
              <ToolRow>
                <Btn $w={23}><CurrencyIcon /></Btn>
                <CaretBtn />
                <Btn $w={24}><Glyph $size={17}>%</Glyph></Btn>
                <Btn $w={20}><Glyph $size={15} $weight={700} $lift={9}>,</Glyph></Btn>
                <Sep $l={5} $r={4} />
                <Btn $w={20}><DecimalIcon more /></Btn>
                <Btn $w={26}><DecimalIcon /></Btn>
              </ToolRow>
            </TwoRows>
          </GroupBody>
          <GroupFoot><GroupLabel>Number</GroupLabel><Launcher><LauncherIcon /></Launcher></GroupFoot>
        </Group>

        <Group $w={477}>
          <GroupBody $pad={4}>
            <LargeBtn $w={70}>
              <LargeIcon><CondIcon /></LargeIcon>
              <LargeLine>Conditional</LargeLine>
              <LargeLine>Formatting<Caret $s={3} /></LargeLine>
            </LargeBtn>
            <LargeBtn $w={58}>
              <LargeIcon><TableIcon /></LargeIcon>
              <LargeLine>Format as</LargeLine>
              <LargeLine>Table<Caret $s={3} /></LargeLine>
            </LargeBtn>
            <Gallery>
              <GalleryGrid>
                <StyleCell $v="normal">Normal</StyleCell>
                <StyleCell $v="bad">Bad</StyleCell>
                <StyleCell $v="good">Good</StyleCell>
                <StyleCell $v="neutral">Neutral</StyleCell>
                <StyleCell $v="calc">Calculation</StyleCell>
                <StyleCell $v="check">Check Cell</StyleCell>
              </GalleryGrid>
              <GalleryScroll>
                <ScrollBtn $off><UpTri /></ScrollBtn>
                <ScrollBtn><Caret /></ScrollBtn>
                <ScrollBtn><MoreIcon /></ScrollBtn>
              </GalleryScroll>
            </Gallery>
          </GroupBody>
          <GroupFoot><GroupLabel>Styles</GroupLabel></GroupFoot>
        </Group>

        <Group $w={136}>
          <GroupBody $pad={2}>
            <LargeBtn $w={42}>
              <LargeIcon><InsertIcon /></LargeIcon>
              <LargeLine>Insert</LargeLine>
              <LargeLine><Caret /></LargeLine>
            </LargeBtn>
            <LargeBtn $w={42}>
              <LargeIcon><DeleteIcon /></LargeIcon>
              <LargeLine>Delete</LargeLine>
              <LargeLine><Caret /></LargeLine>
            </LargeBtn>
            <LargeBtn $w={42}>
              <LargeIcon><FormatIcon /></LargeIcon>
              <LargeLine>Format</LargeLine>
              <LargeLine><Caret /></LargeLine>
            </LargeBtn>
          </GroupBody>
          <GroupFoot><GroupLabel>Cells</GroupLabel></GroupFoot>
        </Group>

        <Group $w={186}>
          <GroupBody $pad={6}>
            <ThreeRows $w={89}>
              <SmallRow><IconBox><SigmaIcon /></IconBox>AutoSum<Btn $w={10} $l={8}><Caret /></Btn></SmallRow>
              <SmallRow><IconBox><FillDownIcon /></IconBox>Fill<Btn $w={8} $l={2}><Caret $s={3} /></Btn></SmallRow>
              <SmallRow><IconBox><EraserIcon /></IconBox>Clear<Btn $w={8} $l={2}><Caret $s={3} /></Btn></SmallRow>
            </ThreeRows>
            <LargeBtn $w={42}>
              <LargeIcon><SortFilterIcon /></LargeIcon>
              <LargeLine>Sort &amp;</LargeLine>
              <LargeLine>Filter<Caret $s={3} /></LargeLine>
            </LargeBtn>
            <LargeBtn $w={42}>
              <LargeIcon><FindIcon /></LargeIcon>
              <LargeLine>Find &amp;</LargeLine>
              <LargeLine>Select<Caret $s={3} /></LargeLine>
            </LargeBtn>
          </GroupBody>
          <GroupFoot><GroupLabel>Editing</GroupLabel></GroupFoot>
        </Group>
        <Collapse>
          <UpTri $c="#666" />
        </Collapse>
      </Ribbon>

      <FormulaRow>
        <BarBox $w={102}>
          <NameText>C8</NameText>
          <Btn $w={20}><Caret $s={5} $c="#777" /></Btn>
        </BarBox>
        <Dots />
        <BarBox $w={110} $l={14}>
          <Btn $w={36}><CrossIcon /></Btn>
          <Btn $w={36}><CheckIcon /></Btn>
          <Btn $w={36}><FxGlyph>fx</FxGlyph></Btn>
        </BarBox>
        <BarBox $l={3}>
          <Btn $w={1398} />
          <ChevronDown />
        </BarBox>
      </FormulaRow>

      <SheetArea>
        <Grid>
          <HeaderRow>
            <Corner><CornerTri /></Corner>
            {COLS.map(([c, w]) => (
              <ColHead key={c || "end"} $w={w} $sel={c === "C"} $plain={c === ""}>{c}</ColHead>
            ))}
          </HeaderRow>
          <GridBody>
            <SheetRows />
          </GridBody>
        </Grid>
        <VScroll>
          <VScrollBtn><UpTri $c="#777" /></VScrollBtn>
          <VScrollTrack />
        </VScroll>
      </SheetArea>
    </Page>
  );
}
